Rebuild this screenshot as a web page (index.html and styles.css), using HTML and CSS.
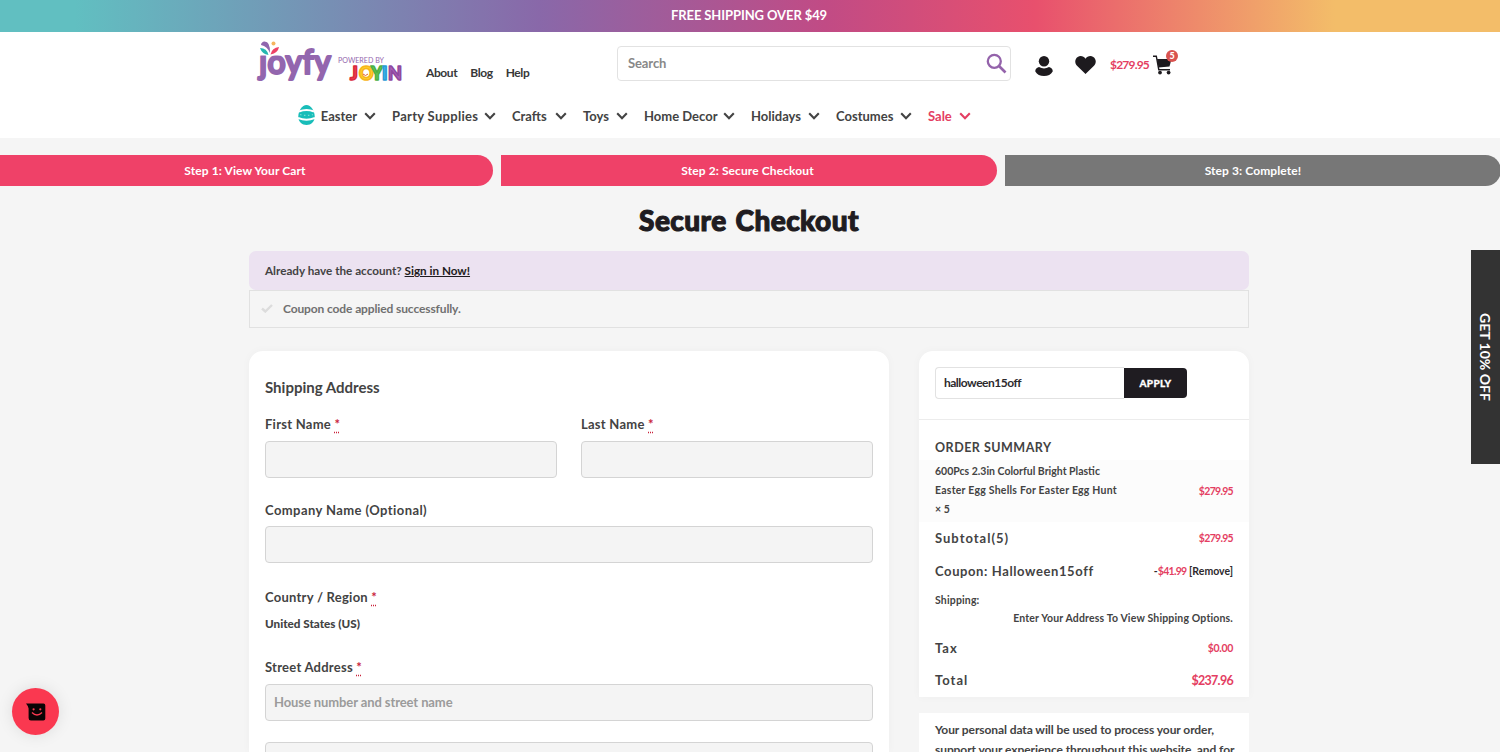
FILE: index.html
```html
<!DOCTYPE html>
<html lang="en">

<head>
    <meta charset="utf-8">
    <title>Secure Checkout</title>
    <meta name="viewport" content="width=device-width, initial-scale=1" />
    <link rel="stylesheet" href="styles.css">
</head>

<body>
    <svg class="defs" width="0" height="0">
        <symbol id="chevron" viewBox="0 0 12 8">
            <path d="M1.2 1.2 6 6.2 10.8 1.2" fill="none" stroke="currentColor" stroke-width="2.1" />
        </symbol>
    </svg>

    <div class="promo">FREE SHIPPING OVER $49</div>

    <header class="header">
        <div class="header-top">
            <a class="logo" href="#">
                <svg width="148" height="44" viewBox="0 0 148 44">
                    <text class="logo-name" x="3" y="34.500" textLength="72" lengthAdjust="spacingAndGlyphs">joyfy</text>
                    <!-- burst over the j -->
                    <path d="M2 0H24V16.500H2Z" fill="#fff" />
                    <path d="M8 2.500Q14.500 2 14 14Q11.500 7.500 5 6Q5 3.500 8 2.500Z" fill="#8f66ad" />
                    <path d="M4 9Q11 9 12.500 16Q6 15 4 9Z" fill="#25b7b0" />
                    <path d="M14.500 15.500Q16 8.500 23 8Q22 14 14.500 15.500Z" fill="#ee4266" />
                    <circle cx="17.500" cy="4.500" r="2" fill="#f5b55e" />
                    <text class="logo-by" x="82" y="23.500" textLength="46" lengthAdjust="spacingAndGlyphs">POWERED BY</text>
                    <g class="logo-joyin">
                        <text x="94" y="40.500" fill="#f0424c" stroke="#d92a3e">J</text>
                        <text x="103" y="40.500" fill="#ffd42e" stroke="#f7b51b">O</text>
                        <text x="115" y="40.500" fill="#6cc955" stroke="#4bb045">Y</text>
                        <text x="126" y="40.500" fill="#45b8ea" stroke="#2a9bd6">I</text>
                        <text x="132" y="40.500" fill="#ab63b8" stroke="#8f489f">N</text>
                    </g>
                    <path d="M107 35q2.500 3 5 0" fill="none" stroke="#e0622c" />
                </svg>
            </a>
            <nav class="links">
                <a href="#">About</a>
                <a href="#">Blog</a>
                <a href="#">Help</a>
            </nav>
            <form class="search">
                <input type="text" placeholder="Search" />
                <svg width="21" height="21" viewBox="0 0 21 21" fill="none" stroke="#9463ab">
                    <circle cx="8.300" cy="8.300" r="6.500" stroke-width="2.300" />
                    <path d="M13 13 19.500 19.500" stroke-width="2.700" />
                </svg>
            </form>
            <a class="account" href="#">
                <svg width="18" height="20" viewBox="0 0 18 20" fill="#1d1a1e">
                    <circle cx="9" cy="5.200" r="5.200" />
                    <path d="M4 11Q9 13.800 14 11Q18 12 17.700 15.500Q15 20 9 20T.3 15.500Q0 12 4 11Z" />
                </svg>
            </a>
            <a class="wishlist" href="#">
                <svg width="21" height="18" viewBox="0 0 21 18" fill="#1d1a1e">
                    <path d="M10.500 18 2 9.800C-.8 6.800 0 2.500 2.700.9 5.500-.7 8.800.2 10.500 2.800 12.200.2 15.500-.7 18.300.9 21 2.500 21.800 6.800 19 9.800Z" />
                </svg>
            </a>
            <a class="cart" href="#">
                <span class="cart-total">$279.95</span>
                <span class="cart-icon">
                    <svg width="20" height="20" viewBox="0 0 20 20" fill="#1d1a1e">
                        <path d="M4 4H18.500L16.500 11.500 5.500 12.500Z" />
                        <path d="M0 1.200H3.300L5.800 14.700H17" fill="none" stroke="#1d1a1e" stroke-width="1.400" />
                        <circle cx="7" cy="17.600" r="1.900" />
                        <circle cx="15.600" cy="17.600" r="1.900" />
                    </svg>
                    <span class="cart-count">5</span>
                </span>
            </a>
        </div>

        <nav class="menu">
            <a href="#">
                <svg class="egg" width="17" height="20" viewBox="0 0 17 20">
                    <path d="M8.500 0C4 0 .3 6 .3 11.500S4 20 8.500 20s8.200-3 8.200-8.500S13 0 8.500 0Z" fill="#18bdb9" />
                    <path d="M1 6.500Q8.500 3.500 16 6.500M0 13Q8.500 16.500 17 13" fill="none" stroke="#fff" stroke-width="1.900" />
                    <path d="M2 9.500Q8.500 11.500 15 9.500" fill="none" stroke="#7bdcd2" stroke-width="1.200" stroke-dasharray="1.500 2.500" />
                </svg>
                <span>Easter</span><svg class="chevron"><use href="#chevron" /></svg>
            </a>
            <a class="party" href="#"><span>Party Supplies</span><svg class="chevron"><use href="#chevron" /></svg></a>
            <a href="#"><span>Crafts</span><svg class="chevron"><use href="#chevron" /></svg></a>
            <a href="#"><span>Toys</span><svg class="chevron"><use href="#chevron" /></svg></a>
            <a href="#"><span>Home Decor</span><svg class="chevron"><use href="#chevron" /></svg></a>
            <a href="#"><span>Holidays</span><svg class="chevron"><use href="#chevron" /></svg></a>
            <a href="#"><span>Costumes</span><svg class="chevron"><use href="#chevron" /></svg></a>
            <a class="sale" href="#"><span>Sale</span><svg class="chevron"><use href="#chevron" /></svg></a>
        </nav>
    </header>

    <div class="steps">
        <div class="step">Step 1: View Your Cart</div>
        <div class="step">Step 2: Secure Checkout</div>
        <div class="step todo">Step 3: Complete!</div>
    </div>

    <main class="page">
        <h1>Secure Checkout</h1>
        <div class="login-notice">Already have the account? <a href="#">Sign in Now!</a></div>
        <div class="message">
            <svg width="12" height="9" viewBox="0 0 12 9"><path d="M1 4.500 4.300 7.500 11 1" fill="none" stroke="#dcdcdc" stroke-width="2.400" /></svg>
            <span>Coupon code applied successfully.</span>
        </div>

        <div class="columns">
            <form class="card address">
                <h2>Shipping Address</h2>
                <div class="field-row">
                    <div class="field">
                        <label>First Name <abbr title="required">*</abbr></label>
                        <input type="text" />
                    </div>
                    <div class="field">
                        <label>Last Name <abbr title="required">*</abbr></label>
                        <input type="text" />
                    </div>
                </div>
                <div class="field company">
                    <label>Company Name (Optional)</label>
                    <input type="text" />
                </div>
                <div class="field country">
                    <label>Country / Region <abbr title="required">*</abbr></label>
                    <strong>United States (US)</strong>
                </div>
                <div class="field street">
                    <label>Street Address <abbr title="required">*</abbr></label>
                    <input type="text" placeholder="House number and street name" />
                    <input type="text" />
                </div>
            </form>

            <aside class="sidebar">
                <div class="card summary">
                    <form class="coupon">
                        <input type="text" value="halloween15off" />
                        <button type="button">APPLY</button>
                    </form>
                    <div class="order">
                        <h3>ORDER SUMMARY</h3>
                        <div class="line product">
                            <span class="name">600Pcs 2.3in Colorful Bright Plastic<br><span class="spaced">Easter Egg Shells For Easter Egg Hunt</span><br>× 5</span>
                            <span class="price">$279.95</span>
                        </div>
                        <div class="line subtotal">
                            <span class="label">Subtotal(5)</span>
                            <span class="price">$279.95</span>
                        </div>
                        <div class="line discount">
                            <span class="label">Coupon: Halloween15off</span>
                            <span class="removal">-<span class="price">$41.99</span> <a href="#">[Remove]</a></span>
                        </div>
                        <div class="shipping">
                            <span>Shipping:</span>
                            <span class="options">Enter Your Address To View Shipping Options.</span>
                        </div>
                        <div class="line tax">
                            <span class="label">Tax</span>
                            <span class="price">$0.00</span>
                        </div>
                        <div class="line total">
                            <span class="label">Total</span>
                            <span class="price">$237.96</span>
                        </div>
                    </div>
                </div>
                <div class="privacy">Your personal data will be used to process your order,<br>support your experience throughout this website, and for</div>
            </aside>
        </div>
    </main>

    <a class="offer" href="#">GET 10% OFF</a>
    <a class="chat" href="#">
        <svg width="20" height="18" viewBox="0 0 20 18">
            <path d="M0 .5H17.500Q19.300.5 19.300 2.500V15.500Q19.300 17.500 17.300 17.500H5Q2.600 17.500 2.600 15V5.500Q2.600 3.500 0 .5Z" fill="#0b0405" />
            <path d="M6 9.500Q11 14.500 16 9.500" fill="none" stroke="#fa3850" stroke-width="1.400" />
            <circle cx="7.600" cy="6.300" r="1.100" fill="#fa3850" />
            <circle cx="14.300" cy="6.300" r="1.100" fill="#fa3850" />
        </svg>
    </a>
</body>

</html>
```

FILE: styles.css
```css
* {
    box-sizing: border-box;
}

body {
    margin: 0;
    height: 752px;
    overflow: hidden;
    background: #f5f5f5;
    color: #434343;
    font-family: Lato, sans-serif;
    font-size: 12px;
    font-weight: 700;
}

a {
    color: inherit;
    text-decoration: none;
}

svg {
    display: block;
    flex: none;
}

input {
    font: inherit;
    color: inherit;
    outline: none;
}

.defs {
    position: absolute;
}

.promo {
    height: 32px;
    padding-right: 2px;
    line-height: 31px;
    text-align: center;
    color: #fff;
    font-size: 13px;
    letter-spacing: -0.1px;
    background: linear-gradient(90deg, #61bfc1 0%, #61bfc1 5%, #8968a9 36%, #c14b85 55%, #e8506d 69%, #f3bd69 89%, #f3bd69 100%);
}

.header {
    height: 106px;
    background: #fff;
}

.header-top {
    display: flex;
    height: 67px;
    padding: 7px 0 0 256px;
}

.logo svg {
    overflow: visible;
}

.logo-name {
    font-family: Lato, sans-serif;
    font-size: 35px;
    font-weight: 700;
    fill: #9366ae;
    stroke: #9366ae;
    stroke-width: 1.8px;
    stroke-linejoin: round;
}

.logo-by {
    font-size: 8px;
    font-weight: 400;
    fill: #9366ae;
}

.logo-joyin {
    font-size: 18px;
    font-weight: 900;
    stroke-width: 1.6px;
    stroke-linejoin: round;
}

.links {
    display: flex;
    gap: 13px;
    width: 191px;
    padding: 25px 0 0 22px;
    line-height: 18px;
    letter-spacing: -0.4px;
    color: #383838;
}

.search {
    display: flex;
    align-items: center;
    width: 394px;
    height: 35px;
    margin-top: 7px;
    margin-left: 22px;
    padding: 0 3px 0 10px;
    border: 1px solid #e2e2e2;
    border-radius: 4px;
}

.search input {
    flex: 1;
    padding: 0 0 2px;
    border: 0;
    font-size: 13px;
    letter-spacing: -0.1px;
}

.search input::placeholder {
    color: #888;
}

.account {
    margin: 17px 0 0 24px;
}

.wishlist {
    margin: 17px 0 0 22px;
}

.cart {
    display: flex;
    margin-left: 14px;
}

.cart-total {
    width: 43px;
    padding-top: 17px;
    line-height: 18px;
    color: #e43e62;
    letter-spacing: -0.8px;
}

.cart-icon {
    position: relative;
    padding-top: 16px;
}

.cart-count {
    position: absolute;
    top: 11px;
    left: 13px;
    width: 12px;
    height: 12px;
    border-radius: 50%;
    background: #d9534f;
    color: #fff;
    font-size: 9px;
    font-weight: 900;
    line-height: 12px;
    text-align: center;
}

.menu {
    display: grid;
    grid-template-columns: 78px 104px 55px 45px 91px 69px 76px 43px;
    gap: 16px;
    padding: 6px 0 0 298px;
    font-size: 13px;
    line-height: 22px;
    white-space: nowrap;
}

.menu a {
    display: flex;
    align-items: center;
    justify-content: space-between;
}

.menu .party {
    letter-spacing: 0.3px;
}

.egg {
    margin: -3px -1px 0 0;
}

.chevron {
    width: 12px;
    height: 8px;
}

.sale {
    color: #e43e62;
}

.steps {
    display: grid;
    grid-template-columns: 493px 496px 496px;
    gap: 8px;
    margin-top: 17px;
}

.step {
    height: 31px;
    padding-right: 3px;
    border-radius: 0 16px 16px 0;
    background: #ef4168;
    color: #fff;
    line-height: 31px;
    letter-spacing: 0.1px;
    text-align: center;
}

.todo {
    padding-right: 0;
    background: #777;
}

.page {
    width: 1000px;
    margin-left: 249px;
}

h1 {
    margin: 14px 0 11px;
    height: 40px;
    line-height: 40px;
    text-align: center;
    color: #1f1c21;
    font-size: 28px;
    font-weight: 900;
    letter-spacing: 0.4px;
    word-spacing: 2px;
    -webkit-text-stroke: 1.1px #1f1c21;
}

.login-notice {
    height: 39px;
    padding-left: 16px;
    border-radius: 7px;
    background: #ece2f1;
    line-height: 39px;
    font-size: 11.7px;
}

.login-notice a {
    color: #1f1c21;
    text-decoration: underline;
}

.message {
    display: flex;
    align-items: center;
    gap: 10px;
    height: 38px;
    padding: 0 0 2px 11px;
    border: 1px solid #e1e1e1;
    color: #707070;
    letter-spacing: -0.12px;
}

.columns {
    display: flex;
    gap: 30px;
    margin-top: 23px;
}

.card {
    border-radius: 14px 14px 0 0;
    background: #fff;
    box-shadow: 0 0 10px rgba(0, 0, 0, 0.03);
}

.address {
    width: 640px;
    height: 401px;
    padding: 25px 16px 0;
    overflow: hidden;
}

h2 {
    margin: 0 0 16px;
    line-height: 22px;
    font-size: 15px;
}

.field {
    display: flex;
    flex-direction: column;
    font-size: 13px;
}

.field-row {
    display: grid;
    grid-template-columns: 1fr 1fr;
    gap: 24px;
}

.field label {
    height: 26px;
    line-height: 20px;
    letter-spacing: 0.25px;
}

.field-row label {
    height: 27px;
}

.field abbr {
    color: #c9223a;
    text-decoration: underline dotted #c9223a;
    text-underline-offset: 3px;
}

.field input {
    width: 100%;
    height: 37px;
    flex: none;
    padding: 0 8px 2px;
    border: 1px solid #d4d4d4;
    border-radius: 4px;
    background: #f4f4f4;
}

.field input::placeholder {
    color: #9b9b9b;
    letter-spacing: -0.1px;
}

.company {
    margin-top: 22px;
}

.company label {
    letter-spacing: 0.42px;
}

.country {
    margin-top: 24px;
}

.country strong {
    line-height: 20px;
    font-size: 11.7px;
}

.street {
    margin-top: 24px;
}

.street label {
    height: 27px;
}

.street input + input {
    margin-top: 21px;
}

.sidebar {
    width: 330px;
}

.summary {
    height: 346px;
}

.coupon {
    display: flex;
    align-items: center;
    height: 69px;
    padding: 0 16px 5px;
    border-bottom: 1px solid #ececec;
}

.coupon input {
    width: 189px;
    height: 32px;
    padding: 0 8px;
    border: 1px solid #e2e2e2;
    border-right: 0;
    border-radius: 4px 0 0 4px;
    color: #2d2a2d;
    letter-spacing: -0.5px;
}

.coupon button {
    width: 63px;
    height: 30px;
    padding: 0;
    border: 0;
    border-radius: 0 4px 4px 0;
    background: #1f1c21;
    color: #fff;
    font: 900 10px Lato, sans-serif;
    letter-spacing: 0.3px;
    -webkit-text-stroke: 0.3px #fff;
}

.order {
    padding-top: 16px;
}

h3 {
    margin: 0;
    padding-left: 16px;
    line-height: 24px;
    font-size: 12.5px;
    letter-spacing: 0.5px;
}

.line {
    display: flex;
    align-items: center;
    justify-content: space-between;
    padding: 0 16px;
}

.label {
    font-size: 13px;
    letter-spacing: 1px;
}

.price {
    color: #e43e62;
    font-size: 10.5px;
    letter-spacing: -0.7px;
}

.product {
    height: 62px;
    padding-bottom: 1px;
    background: #fcfcfc;
}

.name {
    font-size: 10.5px;
    line-height: 18.7px;
}

.spaced {
    letter-spacing: 0.23px;
}

.subtotal {
    height: 32px;
}

.discount {
    height: 33px;
}

.discount .label {
    letter-spacing: 0.6px;
}

.removal {
    font-size: 10.5px;
    color: #2d2a2d;
}

.shipping {
    display: flex;
    flex-direction: column;
    margin-top: 4px;
    padding: 0 16px;
    font-size: 10.5px;
    line-height: 18px;
    letter-spacing: 0.16px;
}

.options {
    align-self: flex-end;
}

.tax {
    height: 32px;
    margin-top: 5px;
}

.tax .price {
    letter-spacing: -0.3px;
}

.total {
    height: 32px;
}

.total .price {
    font-size: 12.5px;
}

.privacy {
    height: 39px;
    margin-top: 16px;
    padding: 7px 0 0 16px;
    overflow: hidden;
    background: #fff;
    line-height: 20px;
    letter-spacing: -0.08px;
    white-space: nowrap;
}

.offer {
    position: fixed;
    top: 250px;
    right: 0;
    width: 29px;
    height: 214px;
    background: #333;
    color: #fff;
    font-size: 14px;
    line-height: 30px;
    text-align: center;
    writing-mode: vertical-rl;
}

.chat {
    position: fixed;
    left: 12px;
    bottom: 17px;
    display: flex;
    align-items: center;
    justify-content: center;
    width: 47px;
    height: 47px;
    border-radius: 50%;
    background: #fa3850;
    box-shadow: 0 0 16px rgba(0, 0, 0, 0.1);
}
```
